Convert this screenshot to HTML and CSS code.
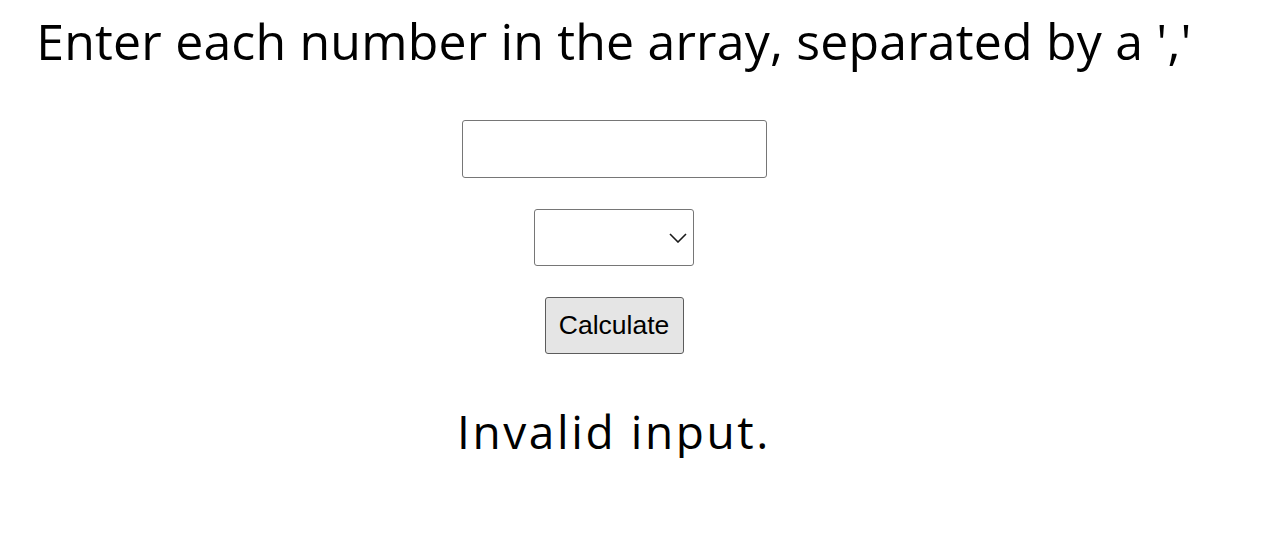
FILE: index.html
```html
<!DOCTYPE html>
<html lang="en">
<head>
<meta charset="utf-8">
<title>Array Calculator</title>
<link rel="stylesheet" href="styles.css">
</head>
<body>
<main class="app">
  <h1 class="prompt">Enter each number in the array, separated by a ','</h1>
  <input class="numbers" type="text">
  <div class="select-wrap">
    <select class="operation"></select>
    <svg class="chevron" width="18" height="10" viewBox="0 0 18 10" aria-hidden="true">
      <path d="M1 1 L9 9 L17 1" fill="none" stroke="#1a1a1a" stroke-width="1.6"/>
    </svg>
  </div>
  <button class="calc" type="button">Calculate</button>
  <p class="result">Invalid input.</p>
</main>
</body>
</html>
```
FILE: styles.css
```css
html, body {
  margin: 0;
  padding: 0;
  background: #fff;
}

.app {
  width: 1228px;
  display: flex;
  flex-direction: column;
  align-items: center;
  font-family: "Open Sans", sans-serif;
  color: #000;
}

.prompt {
  margin: 11px 0 0;
  font-size: 50px;
  font-weight: 400;
  line-height: 60px;
  letter-spacing: 0.18px;
  white-space: nowrap;
}

.numbers {
  box-sizing: border-box;
  margin-top: 49px;
  width: 305px;
  height: 58px;
  border: 1px solid #767676;
  border-radius: 3px;
  background: #fff;
  font-size: 20px;
  padding: 0 8px;
}

.select-wrap {
  position: relative;
  margin-top: 31px;
  width: 160px;
  height: 57px;
}

.operation {
  box-sizing: border-box;
  -webkit-appearance: none;
  appearance: none;
  width: 160px;
  height: 57px;
  border: 1px solid #767676;
  border-radius: 3px;
  background: #fff;
  font-size: 20px;
}

.chevron {
  position: absolute;
  right: 7px;
  top: 24px;
  pointer-events: none;
}

.calc {
  box-sizing: border-box;
  margin-top: 31px;
  width: 139px;
  height: 57px;
  padding: 0;
  border: 1px solid #5c5c5c;
  border-radius: 3px;
  background: #e5e5e5;
  color: #000;
  font-family: "Liberation Sans", Arial, sans-serif;
  font-size: 26.5px;
}

.result {
  margin: 50px 0 0;
  font-size: 46px;
  line-height: 54px;
  letter-spacing: 2.6px;
}
```
